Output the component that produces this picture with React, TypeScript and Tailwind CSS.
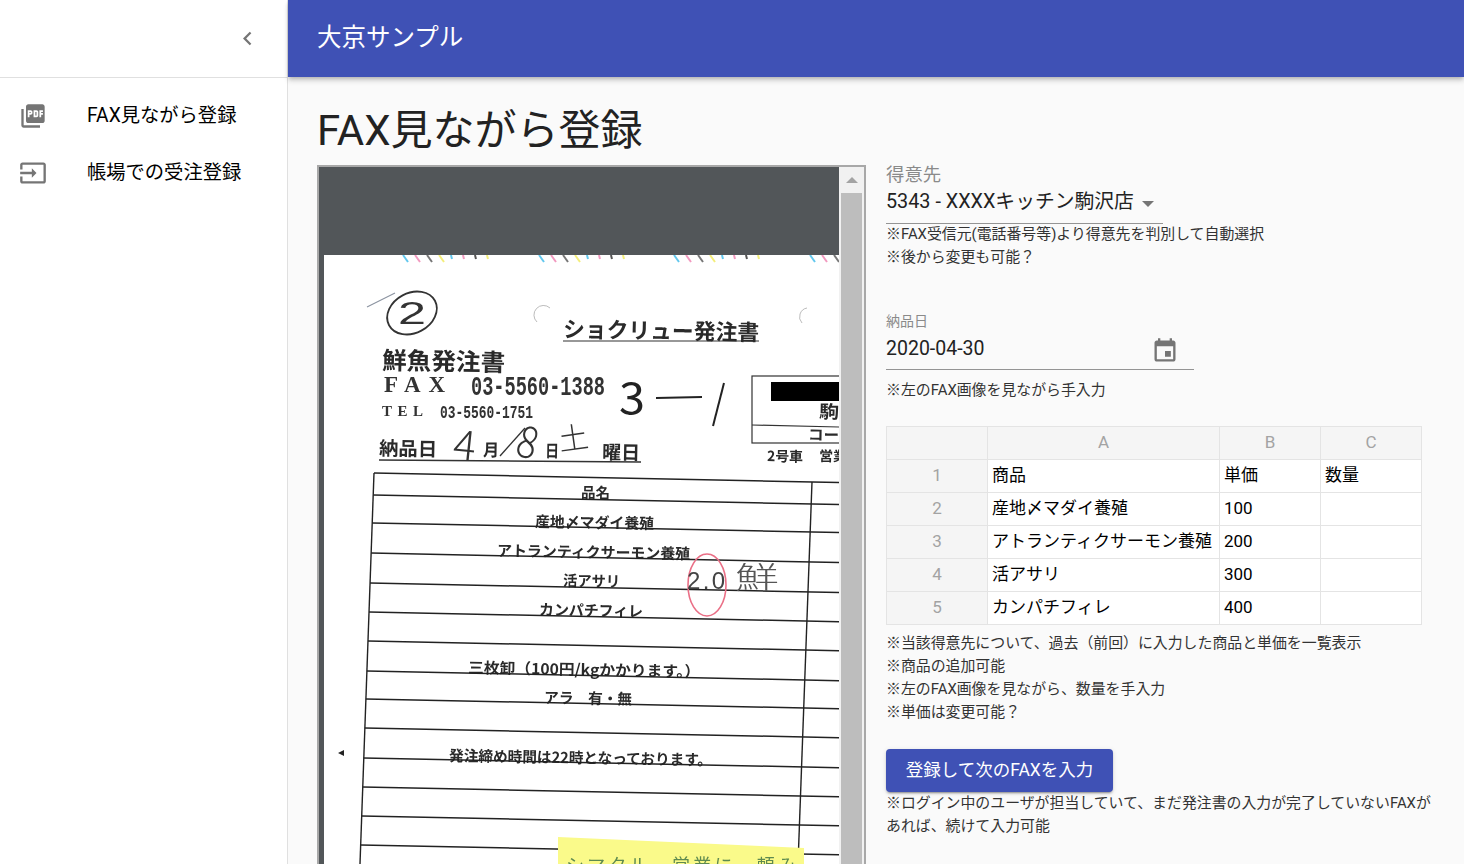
import { ReactNode } from 'react'

const jp = "font-['Roboto','Noto_Sans_CJK_JP',sans-serif]"

const NavItem = ({ icon, children }: { icon: ReactNode, children: ReactNode }) => (
    <div className="flex items-center h-[57px] pl-[19px]">
        <div className="w-[68px] flex-none">{icon}</div>
        <span className="mt-[2px] text-[19.3px] text-black">{children}</span>
    </div>
)

const Note = ({ children }: { children: ReactNode }) => (
    <div className="text-[14.9px] leading-[23px] text-[#333]">{children}</div>
)

const columns = ['A', 'B', 'C']
const rows = [
    ['商品', '単価', '数量'],
    ['産地〆マダイ養殖', '100', ''],
    ['アトランティクサーモン養殖', '200', ''],
    ['活アサリ', '300', ''],
    ['カンパチフィレ', '400', ''],
]

const Sheet = () => (
    <table className="w-[536px] table-fixed border-collapse text-[17px] text-black">
        <colgroup>
            <col className="w-[101px]" />
            <col className="w-[232px]" />
            <col className="w-[101px]" />
            <col className="w-[101px]" />
        </colgroup>
        <tbody>
            <tr className="h-[33px]">
                <td className="border border-[#e4e4e4] bg-[#f5f5f5]" />
                {columns.map(c => <td key={c} className="border border-[#e4e4e4] bg-[#f5f5f5] text-center text-[#a3a3a3]">{c}</td>)}
            </tr>
            {rows.map((row, i) => (
                <tr key={i} className="h-[33px]">
                    <td className="border border-[#e4e4e4] bg-[#f5f5f5] text-center text-[#a3a3a3]">{i + 1}</td>
                    {row.map((cell, j) => <td key={j} className="border border-[#e4e4e4] bg-white px-[4px] whitespace-nowrap overflow-hidden">{cell}</td>)}
                </tr>
            ))}
        </tbody>
    </table>
)

const ruleRows = [473, 495, 523, 553, 583, 612, 641, 671, 699, 728, 758, 787, 816, 845]
const tickColors = ['#63c8ee', '#f29ac0', '#777', '#f4ee7a', '#63c8ee', '#f29ac0', '#555', '#f4ee7a']
const tickGroups = [403, 539, 674, 810]

type FaxLine = { text: string, x: number, y: number, w: number, size: number }

const faxLines: FaxLine[] = [
    { text: 'ショクリュー発注書', x: 563, y: 337, w: 196, size: 22 },
    { text: '鮮魚発注書', x: 382, y: 369, w: 123, size: 24 },
    { text: '納品日', x: 379, y: 455, w: 58, size: 19 },
    { text: '月', x: 483, y: 456, w: 16, size: 17 },
    { text: '日', x: 545, y: 457, w: 14, size: 17 },
    { text: '曜日', x: 602, y: 459, w: 38, size: 19 },
    { text: '駒', x: 819, y: 418, w: 20, size: 18 },
    { text: 'コー', x: 808, y: 440, w: 31, size: 15 },
    { text: '2号車', x: 767, y: 461, w: 36, size: 14 },
    { text: '営業', x: 819, y: 461, w: 28, size: 14 },
    { text: '品名', x: 581, y: 498, w: 29, size: 15 },
    { text: '産地〆マダイ養殖', x: 535, y: 527, w: 119, size: 15 },
    { text: 'アトランティクサーモン養殖', x: 497, y: 556, w: 193, size: 15 },
    { text: '活アサリ', x: 563, y: 586, w: 57, size: 15 },
    { text: 'カンパチフィレ', x: 539, y: 615, w: 104, size: 15 },
    { text: '三枚卸（100円/kgかかります。）', x: 468, y: 673, w: 232, size: 15 },
    { text: 'アラ　有・無', x: 544, y: 703, w: 88, size: 15 },
    { text: '発注締め時間は22時となっております。', x: 449, y: 761, w: 263, size: 15 },
]

// scanned order sheet, the only picture on the page
const FaxPage = () => (
    <svg viewBox="324 255 515 609" className="block w-[515px] h-[609px] bg-white blur-[0.35px]">
        {tickGroups.flatMap(g => tickColors.map((c, i) => (
            <line key={`${g}-${i}`} x1={g + i * 12} y1={255} x2={g + i * 12 + (i < 4 ? 5 : 1)} y2={i < 4 ? 262 : 259} stroke={c} strokeWidth={2} />
        )))}

        <line x1={367} y1={307} x2={395} y2={293} stroke="#8b93a0" strokeWidth={1.2} />
        <ellipse cx={412} cy={313} rx={26} ry={20} transform="rotate(-28 412 313)" fill="none" stroke="#333" strokeWidth={1.8} />
        <text x={398} y={324} fontSize={32} fontFamily="Liberation Sans" fill="#333" textLength={28} lengthAdjust="spacingAndGlyphs">2</text>
        <path d="M537 322a9 9 0 0 1 13-14M802 323a9 9 0 0 1 5-15" fill="none" stroke="#aaa" strokeWidth={0.8} />

        <line x1={563} y1={341} x2={759} y2={341} stroke="#333" strokeWidth={1.2} />

        <text x={384} y={392} fontSize={23} fontFamily="Liberation Serif" fontWeight="bold" textLength={61} fill="#333">FAX</text>
        <text x={471} y={395} fontSize={27} fontFamily="Liberation Mono" textLength={134} lengthAdjust="spacingAndGlyphs" fill="#333" fontWeight="bold">03-5560-1388</text>
        <text x={382} y={416} fontSize={15} fontFamily="Liberation Serif" fontWeight="bold" textLength={41} fill="#333">TEL</text>
        <text x={440} y={418} fontSize={18} fontFamily="Liberation Mono" textLength={93} lengthAdjust="spacingAndGlyphs" fill="#333" fontWeight="bold">03-5560-1751</text>

        {faxLines.map(l => (
            <text key={l.text} x={l.x} y={l.y} fontSize={l.size} fontFamily="Noto Sans CJK JP" fontWeight={700} textLength={l.w} lengthAdjust="spacingAndGlyphs" fill="#2a2a2a" transform={`rotate(1 ${l.x} ${l.y})`}>{l.text}</text>
        ))}

        <text x={619} y={414} fontSize={44} fontFamily="Noto Sans CJK JP" fontWeight={400} fill="#222" textLength={26} lengthAdjust="spacingAndGlyphs">3</text>
        <line x1={656} y1={398} x2={702} y2={397} stroke="#222" strokeWidth={2} />
        <line x1={724} y1={383} x2={713} y2={426} stroke="#222" strokeWidth={2} />

        <line x1={379} y1={460} x2={641} y2={462} stroke="#333" strokeWidth={1.4} />
        <text x={452} y={459} fontSize={42} fontFamily="Noto Sans CJK JP" fontWeight={300} fill="#333" transform="rotate(6 452 459)">4</text>
        <line x1={500} y1={456} x2={525} y2={428} stroke="#333" strokeWidth={1.3} />
        <text x={518} y={458} fontSize={44} fontFamily="Noto Sans CJK JP" fontWeight={300} fill="#333" textLength={20} lengthAdjust="spacingAndGlyphs" transform="rotate(16 528 441)">8</text>
        <text x={560} y={451} fontSize={30} fontFamily="Noto Sans CJK JP" fontWeight={300} fill="#333" transform="rotate(-8 560 451)">土</text>

        <rect x={752} y={376} width={100} height={67} fill="none" stroke="#333" strokeWidth={1.2} />
        <line x1={752} y1={425} x2={839} y2={427} stroke="#333" strokeWidth={1.2} />
        <rect x={771} y={382} width={68} height={19} fill="#000" />

        <line x1={374} y1={473} x2={360} y2={864} stroke="#222" strokeWidth={1.4} />
        <line x1={812} y1={482} x2={798} y2={864} stroke="#222" strokeWidth={1.4} />
        {ruleRows.map(y => {
            const start = 374 - (y - 473) * 0.036
            return <line key={y} x1={start} y1={y} x2={839} y2={y + (839 - start) * 0.0205} stroke="#222" strokeWidth={1.5} />
        })}

        <ellipse cx={707} cy={585} rx={19} ry={31} fill="none" stroke="#ea6f86" strokeWidth={1.6} />
        <text x={687} y={589} fontSize={24} fontFamily="Liberation Sans" fill="#444" textLength={38}>2.0</text>
        <text x={735} y={588} fontSize={30} fontFamily="Noto Sans CJK JP" fontWeight={300} fill="#555" textLength={44} lengthAdjust="spacingAndGlyphs">鮮</text>

        <polygon points="558,837 804,848 804,864 558,864" fill="#fafa8a" />
        <text x={566} y={872} fontSize={18} fontFamily="Noto Sans CJK JP" fill="#5e8a50" textLength={230}>シマタル　営業に　頼み</text>

        <polygon points="338,753 344,750 344,756" fill="#222" />
    </svg>
)

export default function App() {
    return (
        <div className={`${jp} flex w-[1464px] h-[864px] overflow-hidden bg-[#fafafa]`}>
            <aside className="w-[288px] flex-none bg-white border-r border-[#e0e0e0]">
                <div className="h-[78px] flex items-center justify-end pr-[26px] pb-[1px] border-b border-[#e0e0e0]">
                    <svg viewBox="0 0 24 24" className="w-[27px] h-[27px] fill-[#757575]">
                        <path d="M15.41 7.41L14 6l-6 6 6 6 1.41-1.41L10.83 12z" />
                    </svg>
                </div>
                <nav className="pt-[9px]">
                    <NavItem icon={
                        <svg viewBox="0 0 24 24" className="w-[28px] h-[28px] fill-[#757575]">
                            <path d="M20 2H8c-1.1 0-2 .9-2 2v12c0 1.1.9 2 2 2h12c1.1 0 2-.9 2-2V4c0-1.1-.9-2-2-2zm-8.5 7.5c0 .83-.67 1.5-1.5 1.5H9v2H7.5V7H10c.83 0 1.5.67 1.5 1.5v1zm5 2c0 .83-.67 1.5-1.5 1.5h-2.5V7H15c.83 0 1.5.67 1.5 1.5v3zm4-3H19v1h1.5V11H19v2h-1.5V7h3v1.5zM9 9.5h1v-1H9v1zM4 6H2v14c0 1.1.9 2 2 2h14v-2H4V6zm10 5.5h1v-3h-1v3z" />
                        </svg>
                    }>FAX見ながら登録</NavItem>
                    <NavItem icon={
                        <svg viewBox="0 0 24 24" className="w-[28px] h-[28px] fill-[#757575]">
                            <path d="M21 3.01H3c-1.1 0-2 .9-2 2V9h2V4.99h18v14.03H3V15H1v4.01c0 1.1.9 1.98 2 1.98h18c1.1 0 2-.88 2-1.98v-14c0-1.11-.9-2-2-2zM11 16l4-4-4-4v3H1v2h10v3z" />
                        </svg>
                    }>帳場での受注登録</NavItem>
                </nav>
            </aside>

            <div className="flex-1 min-w-0 flex flex-col">
                <header className="h-[77px] flex-none flex items-center pl-[29px] bg-[#3f51b5] text-white text-[24.5px] shadow-[0_2px_4px_-1px_rgba(0,0,0,0.2),0_4px_5px_0_rgba(0,0,0,0.14)] z-10">
                    大京サンプル
                </header>

                <main className="flex-1 min-h-0 pl-[29px]">
                    <h1 className="mt-[26px] h-[62px] text-[42px] leading-[56px] text-[#222]">FAX見ながら登録</h1>
                    <div className="flex gap-[20px]">
                        <div className="w-[549px] flex-none h-[700px] flex border-2 border-[#a8a8a8] border-b-0 bg-[#f1f1f1]">
                            <div className="w-[520px] flex-none bg-[#525659] pt-[88px] pl-[5px] overflow-hidden">
                                <FaxPage />
                            </div>
                            <div className="flex-1 flex flex-col items-center">
                                <div className="h-[26px] flex items-center">
                                    <div className="w-0 h-0 border-x-[6px] border-x-transparent border-b-[6px] border-b-[#a3a3a3]" />
                                </div>
                                <div className="flex-1 w-[21px] bg-[#bdbdbd]" />
                            </div>
                        </div>

                        <div className="flex-1 min-w-0">
                            <div className="mt-[-4px] text-[18.4px] leading-[28px] text-[#8a8a8a]">得意先</div>
                            <div className="w-[277px] h-[35px] flex items-center pb-[8px] border-b border-[#949494] text-[19.8px] text-[#222]">
                                <span>5343 - XXXXキッチン駒沢店</span>
                                <span className="ml-[8px] mt-[3px] w-0 h-0 border-x-[6.5px] border-x-transparent border-t-[6px] border-t-[#757575]" />
                            </div>
                            <div className="mt-[-1px]">
                                <Note>※FAX受信元(電話番号等)より得意先を判別して自動選択</Note>
                                <Note>※後から変更も可能？</Note>
                            </div>

                            <div className="mt-[41px] text-[14px] leading-[22px] text-[#8a8a8a]">納品日</div>
                            <div className="w-[308px] h-[38px] flex items-center justify-between pr-[15px] border-b border-[#949494] text-[19.5px] text-[#222]">
                                <span className="mt-[-3px]">2020-04-30</span>
                                <svg viewBox="0 0 24 24" className="w-[28px] h-[28px] fill-[#757575]">
                                    <path d="M17 12h-5v5h5v-5zM16 1v2H8V1H6v2H5c-1.11 0-1.99.9-1.99 2L3 19c0 1.1.89 2 2 2h14c1.1 0 2-.9 2-2V5c0-1.1-.9-2-2-2h-1V1h-2zm3 18H5V8h14v11z" />
                                </svg>
                            </div>
                            <div className="mt-[9px]">
                                <Note>※左のFAX画像を見ながら手入力</Note>
                            </div>

                            <div className="mt-[24px]">
                                <Sheet />
                            </div>
                            <div className="mt-[7px]">
                                <Note>※当該得意先について、過去（前回）に入力した商品と単価を一覧表示</Note>
                                <Note>※商品の追加可能</Note>
                                <Note>※左のFAX画像を見ながら、数量を手入力</Note>
                                <Note>※単価は変更可能？</Note>
                            </div>

                            <button className="mt-[25px] w-[227px] h-[43px] rounded bg-[#3f51b5] text-white text-[17.5px] shadow-[0_3px_1px_-2px_rgba(0,0,0,0.2),0_2px_2px_0_rgba(0,0,0,0.14),0_1px_5px_0_rgba(0,0,0,0.12)]">
                                登録して次のFAXを入力
                            </button>
                            <div className="w-[555px]">
                                <Note>※ログイン中のユーザが担当していて、まだ発注書の入力が完了していないFAXがあれば、続けて入力可能</Note>
                            </div>
                        </div>
                    </div>
                </main>
            </div>
        </div>
    )
}
